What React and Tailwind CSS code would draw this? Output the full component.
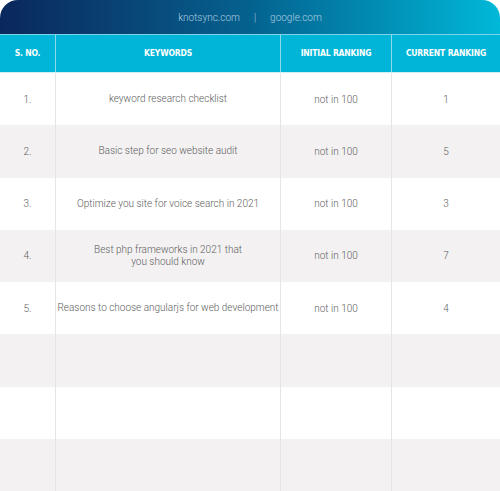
import React from 'react';

const rows = [
  { no: '1.', keyword: 'keyword research checklist', initial: 'not in 100', current: '1' },
  { no: '2.', keyword: 'Basic step for seo website audit', initial: 'not in 100', current: '5' },
  { no: '3.', keyword: 'Optimize you site for voice search in 2021', initial: 'not in 100', current: '3' },
  { no: '4.', keyword: 'Best php frameworks in 2021 that\nyou should know', initial: 'not in 100', current: '7' },
  { no: '5.', keyword: 'Reasons to choose angularjs for web development', initial: 'not in 100', current: '4' },
  { no: '', keyword: '', initial: '', current: '' },
  { no: '', keyword: '', initial: '', current: '' },
  { no: '', keyword: '', initial: '', current: '' },
];

const cols = 'grid grid-cols-[56px_225px_111px_1fr]';

const App = () => {
  return (
    <div className="w-[500px] h-[491px] bg-white flex flex-col overflow-hidden font-['Roboto',Arial,sans-serif]">
      {/* Top bar */}
      <div className="h-[34px] shrink-0 rounded-t-[18px] bg-gradient-to-r from-[#0a275c] via-[#04628f] to-[#00b8d8] flex items-center justify-center gap-[14px] text-[10px] font-light text-[#b0cde0]">
        <span>knotsync.com</span>
        <span>|</span>
        <span>google.com</span>
      </div>

      {/* Header row */}
      <div className={`${cols} h-[38px] shrink-0 bg-[#00b5d7] border-t border-[#7fd3e6] text-white font-bold text-[8.5px] tracking-[-0.02em] uppercase font-['DejaVu_Sans_Condensed','DejaVu_Sans',sans-serif] [font-stretch:condensed]`}>
        <div className="flex items-center justify-center border-r border-[#8ed8ea]">S. No.</div>
        <div className="flex items-center justify-center border-r border-[#8ed8ea]">Keywords</div>
        <div className="flex items-center justify-center border-r border-[#8ed8ea]">Initial Ranking</div>
        <div className="flex items-center justify-center">Current Ranking</div>
      </div>

      {/* Body */}
      <div className="flex-1 flex flex-col border-t border-[#cfeef5]">
        {rows.map((r, i) => (
          <div
            key={i}
            className={`${cols} flex-1 text-[10px] font-light text-[#5e5e5e] ${i % 2 === 1 ? 'bg-[#f3f1f2]' : 'bg-white'}`}
          >
            <div className="flex items-center justify-center border-r border-[#e6e4e5]">{r.no}</div>
            <div className="flex items-center justify-center text-center whitespace-pre leading-[12px] border-r border-[#e6e4e5]">
              {r.keyword}
            </div>
            <div className="flex items-center justify-center border-r border-[#e6e4e5]">{r.initial}</div>
            <div className="flex items-center justify-center">{r.current}</div>
          </div>
        ))}
      </div>
    </div>
  );
};

export default App;
